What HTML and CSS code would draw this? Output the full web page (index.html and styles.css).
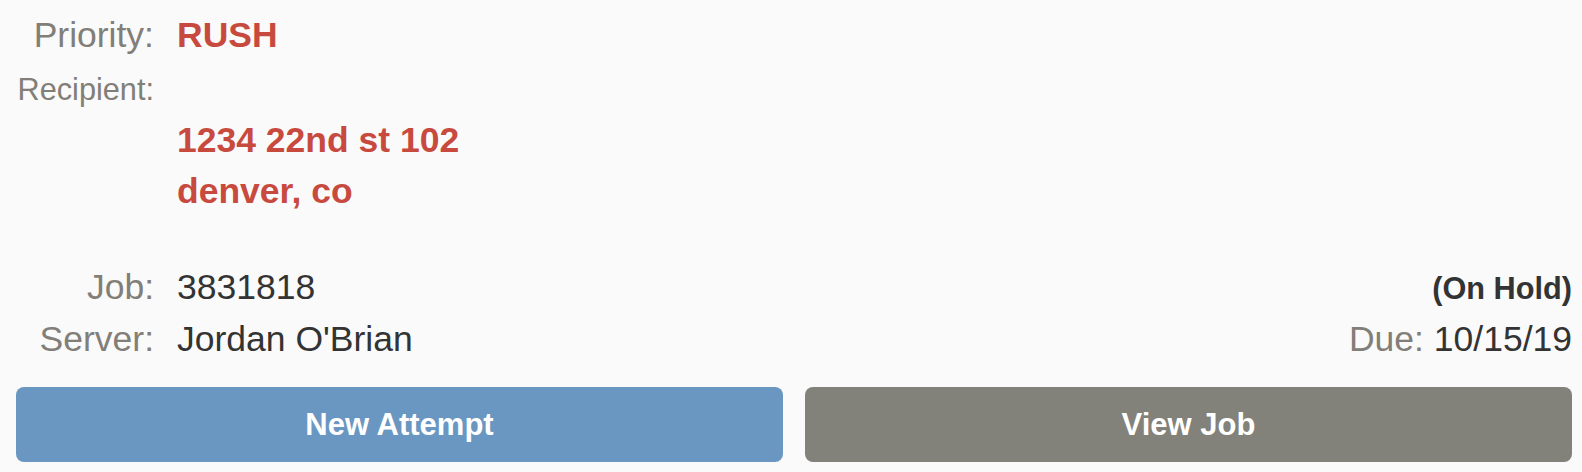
FILE: index.html
```html
<!DOCTYPE html>
<html>
<head>
<meta charset="utf-8">
<link rel="stylesheet" href="styles.css">
</head>
<body>
<div class="card">
  <div class="row">
    <span class="label">Priority:</span>
    <span class="value rush">RUSH</span>
  </div>
  <div class="row row-recipient">
    <span class="label small">Recipient:</span>
  </div>
  <div class="row address-row">
    <span class="label"></span>
    <div class="value address">
      <div>1234 22nd st 102</div>
      <div>denver, co</div>
    </div>
  </div>
  <div class="row row-job">
    <span class="label">Job:</span>
    <span class="value">3831818</span>
    <span class="right status">(On Hold)</span>
  </div>
  <div class="row">
    <span class="label">Server:</span>
    <span class="value">Jordan O'Brian</span>
    <span class="right"><span class="due-label">Due:</span> 10/15/19</span>
  </div>
  <div class="actions">
    <button class="btn btn-primary">New Attempt</button>
    <button class="btn btn-secondary">View Job</button>
  </div>
</div>
</body>
</html>
```
FILE: styles.css
```css
html, body {
  margin: 0;
  padding: 0;
  background: #fafafa;
}
body {
  font-family: "Liberation Sans", Arial, Helvetica, sans-serif;
  color: #333333;
}
.card {
  padding: 10px 10px 0 16px;
}
.row {
  display: flex;
  align-items: baseline;
  font-size: 35.5px;
  line-height: 51px;
}
.label {
  flex: 0 0 138px;
  text-align: right;
  color: #827e78;
  margin-right: 23px;
  white-space: nowrap;
}
.label.small {
  font-size: 30.7px;
}
.row-recipient {
  margin-top: 3px;
}
.value {
  white-space: nowrap;
}
.rush, .address {
  color: #c84a3e;
  font-weight: bold;
}
.row-job {
  margin-top: 45px;
}
.right {
  margin-left: auto;
  white-space: nowrap;
}
.status {
  font-size: 30.7px;
  font-weight: bold;
  color: #333333;
}
.due-label {
  color: #827e78;
}
.actions {
  display: flex;
  gap: 22px;
  margin-top: 22px;
}
.btn {
  flex: 1 1 0;
  height: 75px;
  border: none;
  border-radius: 8px;
  color: #ffffff;
  font-family: "Liberation Sans", Arial, Helvetica, sans-serif;
  font-size: 31px;
  font-weight: bold;
  padding: 0;
}
.btn-primary {
  background: #6a97c1;
}
.btn-secondary {
  background: #82817a;
}
```
